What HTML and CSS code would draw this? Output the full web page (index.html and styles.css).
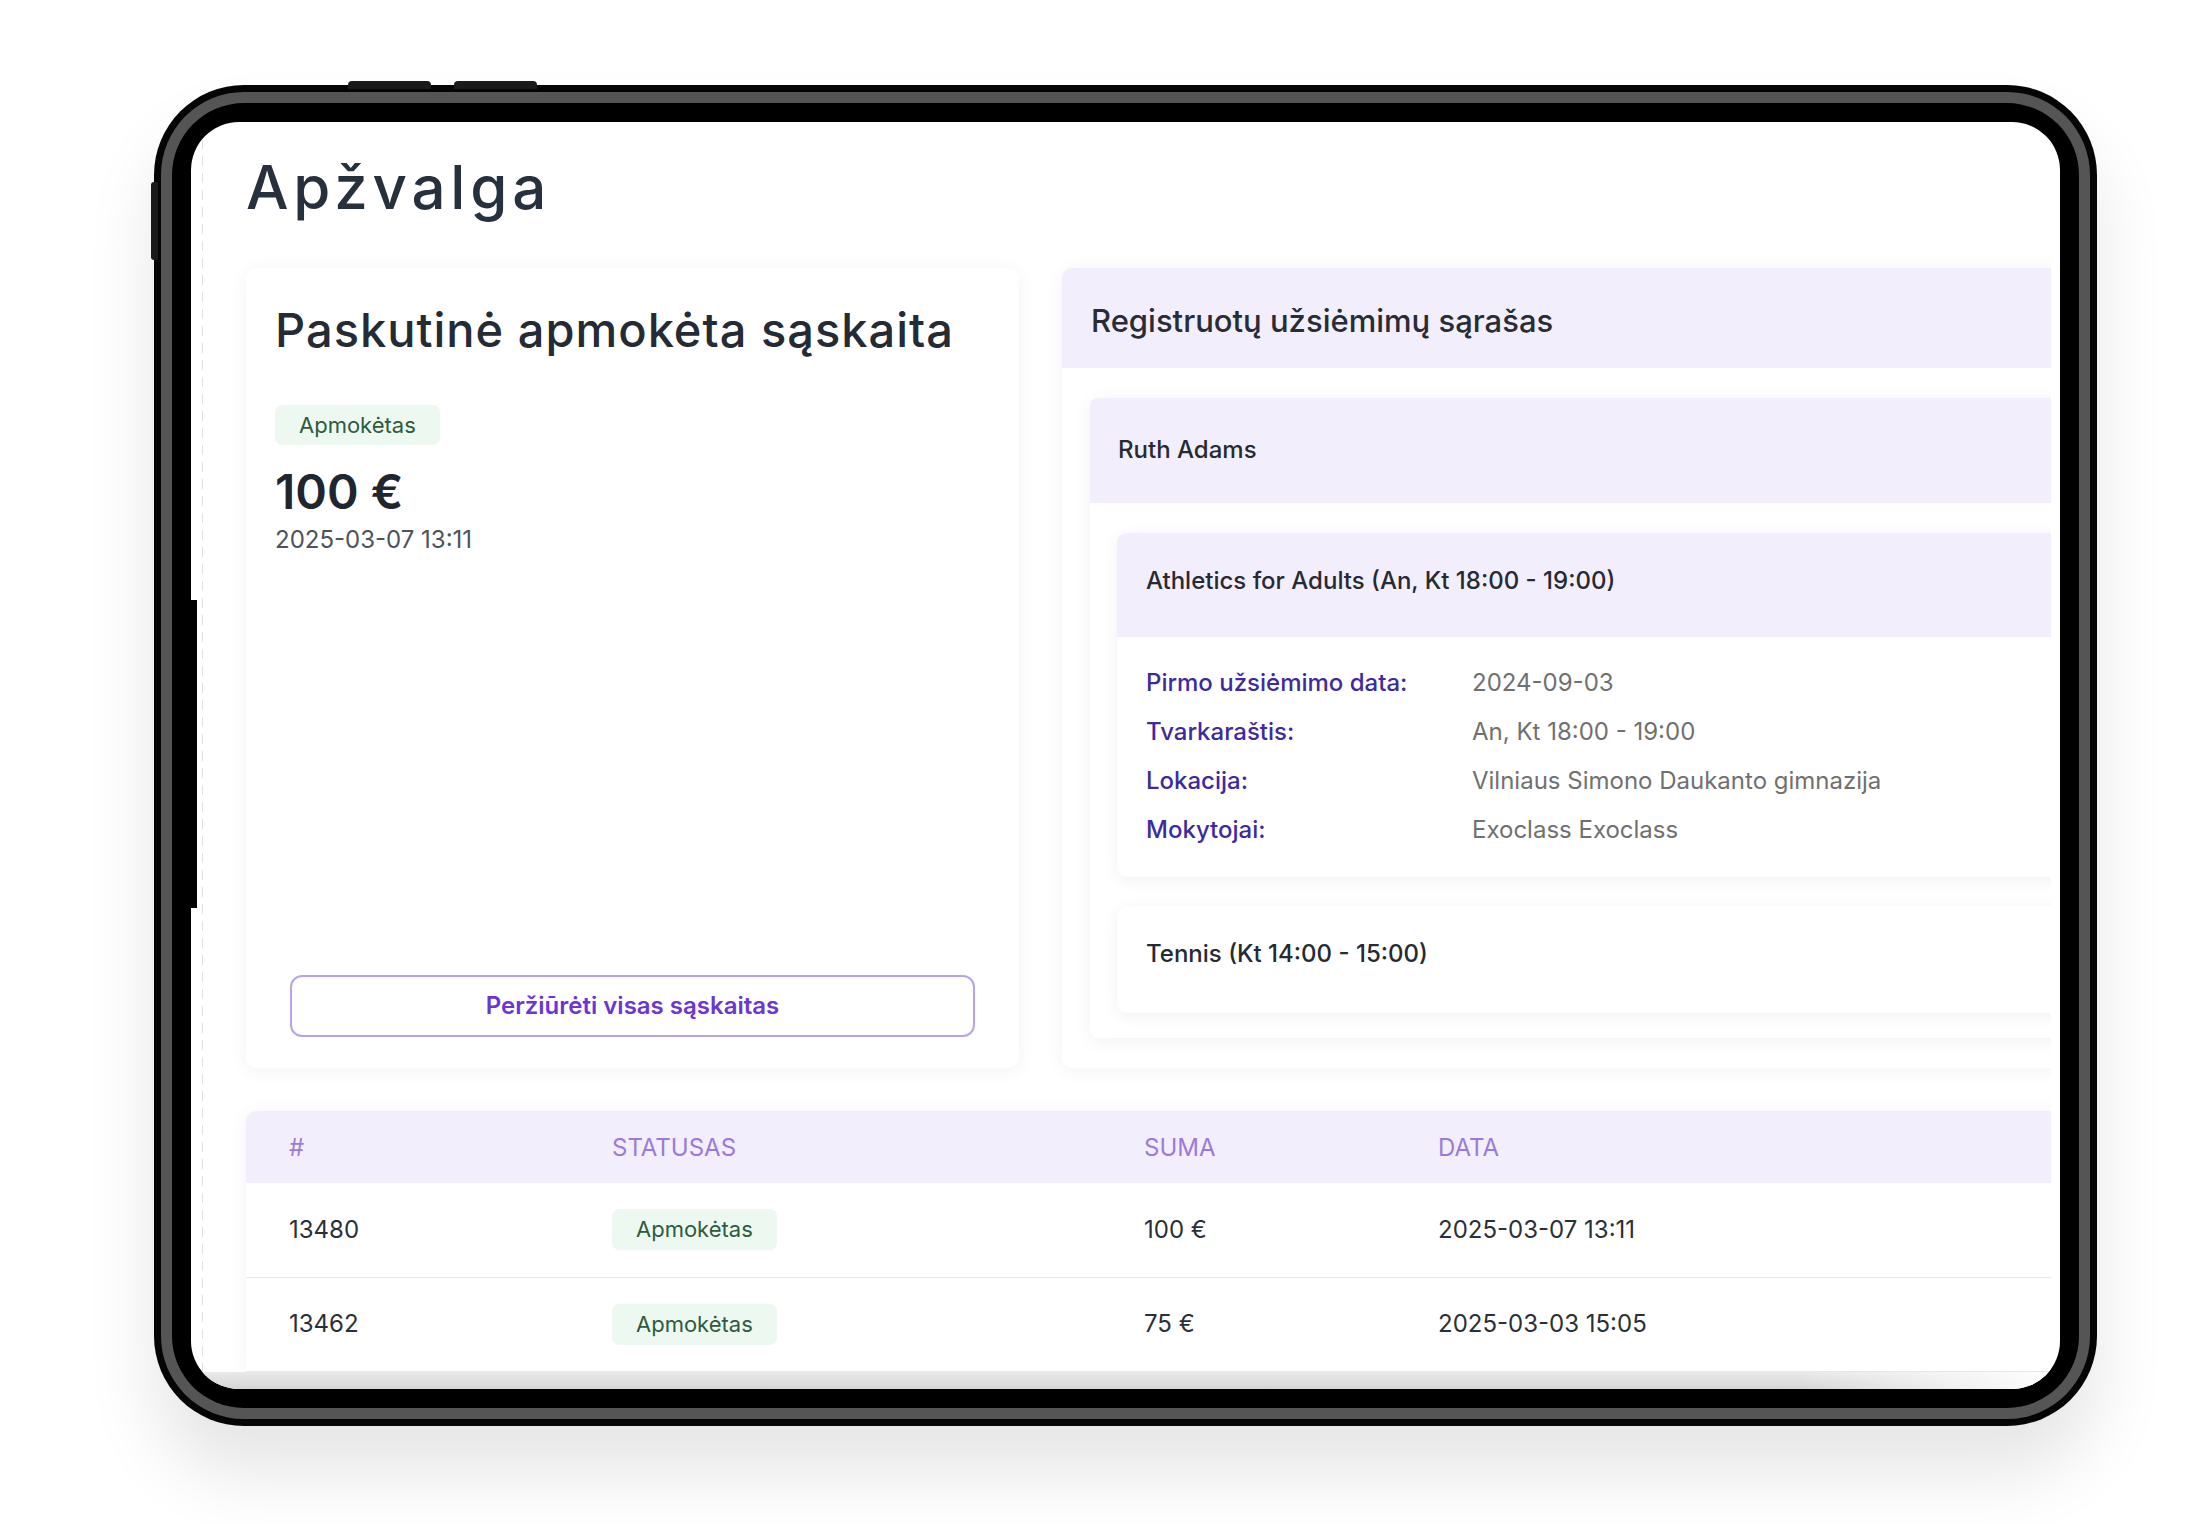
FILE: index.html
```html
<!DOCTYPE html>
<html lang="lt">
<head>
<meta charset="utf-8">
<title>Apžvalga</title>
<link rel="stylesheet" href="styles.css">
</head>
<body>
<div class="stage">
  <div class="device">
    <span class="hw-btn hw-btn-top hw-btn-top-1"></span>
    <span class="hw-btn hw-btn-top hw-btn-top-2"></span>
    <span class="hw-btn hw-btn-side"></span>
    <div class="ring">
      <div class="bezel">
        <div class="screen">
          <span class="screen-edge"></span>
          <div class="screen-body">
            <div class="rail"></div>
            <main class="main">
              <h1 class="page-title">Apžvalga</h1>
              <div class="cards">
                <section class="card card-invoice">
                  <h2 class="invoice-title">Paskutinė apmokėta sąskaita</h2>
                  <span class="badge badge-lg">Apmokėtas</span>
                  <div class="amount">100 €</div>
                  <div class="paid-date">2025-03-07 13:11</div>
                  <button class="btn-outline" type="button">Peržiūrėti visas sąskaitas</button>
                </section>
                <section class="card card-classes">
                  <div class="classes-head">Registruotų užsiėmimų sąrašas</div>
                  <div class="classes-body">
                    <div class="student">
                      <div class="student-head">Ruth Adams</div>
                      <div class="student-body">
                        <div class="course">
                          <div class="course-head">Athletics for Adults (An, Kt 18:00 - 19:00)</div>
                          <div class="course-details">
                            <div class="detail-label">Pirmo užsiėmimo data:</div>
                            <div class="detail-value">2024-09-03</div>
                            <div class="detail-label">Tvarkaraštis:</div>
                            <div class="detail-value">An, Kt 18:00 - 19:00</div>
                            <div class="detail-label">Lokacija:</div>
                            <div class="detail-value">Vilniaus Simono Daukanto gimnazija</div>
                            <div class="detail-label">Mokytojai:</div>
                            <div class="detail-value">Exoclass Exoclass</div>
                          </div>
                        </div>
                        <div class="course">
                          <div class="course-head course-head-plain">Tennis (Kt 14:00 - 15:00)</div>
                        </div>
                      </div>
                    </div>
                  </div>
                </section>
              </div>
              <div class="table-card">
                <table class="invoices">
                  <colgroup>
                    <col class="col-id">
                    <col class="col-status">
                    <col class="col-sum">
                    <col class="col-date">
                  </colgroup>
                  <thead>
                    <tr><th>#</th><th>Statusas</th><th>Suma</th><th>Data</th></tr>
                  </thead>
                  <tbody>
                    <tr>
                      <td>13480</td>
                      <td><span class="badge">Apmokėtas</span></td>
                      <td>100 €</td>
                      <td>2025-03-07 13:11</td>
                    </tr>
                    <tr>
                      <td>13462</td>
                      <td><span class="badge">Apmokėtas</span></td>
                      <td>75 €</td>
                      <td>2025-03-03 15:05</td>
                    </tr>
                  </tbody>
                </table>
              </div>
            </main>
          </div>
          <div class="screen-band"></div>
        </div>
      </div>
    </div>
  </div>
</div>
</body>
</html>
```
FILE: styles.css
```css
* { box-sizing: border-box; }

html, body {
  margin: 0;
  background: #ffffff;
}

body {
  font-family: Inter, "Noto Sans", "Liberation Sans", sans-serif;
  color: #252a33;
}

.stage {
  width: 2208px;
  height: 1524px;
  padding: 85px 0 0 154px;
  overflow: hidden;
}

/* ---------- device frame ---------- */
.device {
  position: relative;
  width: 1943px;
  height: 1341px;
  padding: 7px;
  background: #050505;
  border-radius: 90px;
  box-shadow: 0 48px 70px rgba(0, 0, 0, 0.10);
}

.hw-btn {
  position: absolute;
  background: #1a1a1a;
}

.hw-btn-top {
  top: -4px;
  width: 83px;
  height: 8px;
  border-radius: 4px 4px 0 0;
}

.hw-btn-top-1 { left: 194px; }
.hw-btn-top-2 { left: 300px; }

.hw-btn-side {
  left: -3px;
  top: 97px;
  width: 7px;
  height: 78px;
  border-radius: 3px 0 0 3px;
}

.ring {
  height: 100%;
  padding: 11px;
  background: #555555;
  border-radius: 83px;
}

.bezel {
  height: 100%;
  padding: 19px;
  background: #000000;
  border-radius: 72px;
}

.screen {
  position: relative;
  height: 100%;
  background: #ffffff;
  border-radius: 48px;
  overflow: hidden;
  display: flex;
  flex-direction: column;
}

.screen-edge {
  position: absolute;
  left: 0;
  top: 478px;
  width: 6px;
  height: 308px;
  background: #000;
  z-index: 2;
}

.screen-body {
  flex: 1;
  min-height: 0;
  display: flex;
  overflow: hidden;
}

.rail {
  flex: none;
  width: 12px;
  background: repeating-linear-gradient(to bottom, #e1e1e1 0 10px, transparent 10px 17px) right top / 1px 100% no-repeat;
}

.main {
  flex: 1;
  min-width: 0;
  margin-right: 9px;
  padding: 29px 0 0 43px;
  overflow: hidden;
}

.screen-band {
  flex: none;
  height: 17px;
  background:
    linear-gradient(to right, rgba(255,255,255,0) 86%, #ffffff 100%),
    linear-gradient(to bottom, #e9e9e9, #d6d6d6);
}

/* ---------- page ---------- */
.page-title {
  margin: 0;
  font-size: 60px;
  line-height: 72px;
  font-weight: 500;
  letter-spacing: 0.08em;
  color: #27303d;
}

.cards {
  margin-top: 45px;
  display: grid;
  grid-template-columns: 773px 1100px;
  column-gap: 43px;
  height: 800px;
}

.card {
  background: #ffffff;
  border-radius: 10px;
  box-shadow: 0 2px 20px rgba(0, 0, 0, 0.05);
}

.card-invoice {
  display: flex;
  flex-direction: column;
  align-items: flex-start;
  padding: 34px 29px 31px;
}

.invoice-title {
  margin: 0;
  font-size: 47px;
  line-height: 56px;
  font-weight: 500;
  letter-spacing: 1px;
  color: #252b35;
}

.badge {
  display: inline-block;
  height: 40px;
  line-height: 40px;
  padding: 0 24px;
  border-radius: 7px;
  background: #edf9f0;
  color: #2e5b3e;
  font-size: 22px;
  font-weight: 400;
}

.badge-lg { margin-top: 47px; }

.amount {
  margin-top: 18px;
  font-size: 48px;
  line-height: 58px;
  font-weight: 600;
  color: #1f2630;
}

.paid-date {
  margin-top: 4px;
  font-size: 24px;
  line-height: 30px;
  color: #4d525b;
}

.btn-outline {
  display: block;
  align-self: stretch;
  margin: auto 15px 0;
  height: 62px;
  padding: 0;
  border: 2px solid #b8a3eb;
  border-radius: 12px;
  background: #ffffff;
  color: #6a36d4;
  font-family: inherit;
  font-size: 24px;
  line-height: 58px;
  font-weight: 600;
  text-align: center;
}

/* ---------- registered classes ---------- */
.card-classes {
  overflow: hidden;
}

.classes-head {
  padding: 33px 29px 27px;
  background: #f3eefb;
  font-size: 31px;
  line-height: 40px;
  font-weight: 500;
  color: #272c35;
}

.classes-body {
  padding: 30px 28px 30px;
}

.student {
  background: #ffffff;
  border-radius: 8px;
  box-shadow: 0 3px 18px rgba(0, 0, 0, 0.06);
  overflow: hidden;
}

.student-head {
  padding: 37px 28px 38px;
  background: #f3eefb;
  font-size: 24px;
  line-height: 30px;
  font-weight: 500;
  color: #252a33;
}

.student-body {
  display: flex;
  flex-direction: column;
  gap: 29px;
  padding: 30px 27px 25px;
}

.course {
  background: #ffffff;
  border-radius: 10px;
  box-shadow: 0 3px 16px rgba(0, 0, 0, 0.06);
  overflow: hidden;
}

.course-head {
  padding: 33px 29px 41px;
  background: #f3eefb;
  font-size: 24px;
  line-height: 30px;
  font-weight: 500;
  color: #252a33;
}

.course-head-plain {
  background: #ffffff;
  padding-bottom: 44px;
}

.course-details {
  display: grid;
  grid-template-columns: 326px 1fr;
  grid-auto-rows: 49px;
  align-items: center;
  padding: 21px 29px 23px;
  font-size: 24px;
  line-height: 30px;
}

.detail-label {
  color: #3e2a9f;
  font-weight: 500;
}

.detail-value {
  color: #707070;
}

/* ---------- table ---------- */
.table-card {
  margin-top: 43px;
  width: 1900px;
  background: #ffffff;
  border-radius: 10px 10px 0 0;
  box-shadow: 0 2px 20px rgba(0, 0, 0, 0.05);
  overflow: hidden;
}

.invoices {
  width: 100%;
  border-collapse: collapse;
  table-layout: fixed;
}

.col-id { width: 323px; }
.col-status { width: 532px; }
.col-sum { width: 294px; }

.invoices th {
  text-align: left;
  padding: 22px 0 20px 43px;
  background: #f3eefb;
  font-size: 24px;
  line-height: 30px;
  font-weight: 400;
  color: #9b7adb;
  text-transform: uppercase;
}

.invoices td {
  height: 94px;
  padding: 0 0 0 43px;
  font-size: 24px;
  line-height: 30px;
  color: #2b2f37;
  border-bottom: 1px solid #e8e8ea;
  vertical-align: middle;
}

.invoices td .badge {
  height: 41px;
  line-height: 41px;
}
```
